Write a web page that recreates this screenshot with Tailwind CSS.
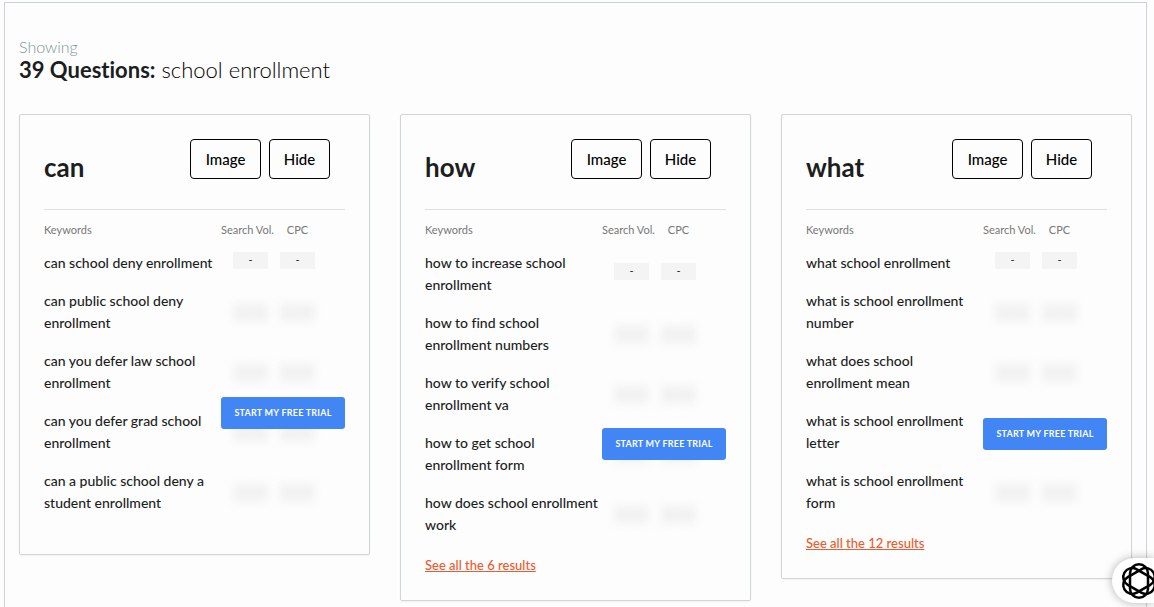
<!DOCTYPE html>
<html lang="en">
<head>
<meta charset="utf-8">
<meta name="viewport" content="width=device-width, initial-scale=1">
<title>39 Questions: school enrollment</title>
<script src="https://cdn.jsdelivr.net/npm/@tailwindcss/browser@4"></script>
</head>
<body class="overflow-hidden bg-[#fdfdfd] font-['Lato',sans-serif] text-[#1c1e1e] [font-variant-ligatures:none]">
<main class="mt-0.5 mr-[7px] ml-1 min-h-screen border border-[#cbd5d8] px-3.5 pt-[34px]">
  <header>
    <p class="text-base leading-5 font-light text-[#7f9197]">Showing</p>
    <h1 class="text-[22px] leading-[26px] font-light text-black"><strong class="font-bold text-[#1c1e1e]">39 Questions:</strong> school enrollment</h1>
  </header>
  <div id="cards" class="mt-[31px] grid grid-cols-3 items-start gap-[30px]"></div>
</main>

<button aria-label="Open assistant" class="fixed right-0 bottom-1 flex h-[45px] w-[42px] items-center rounded-l-full bg-white pl-2 shadow-[0_0_10px_rgba(0,0,0,0.3)]">
  <svg class="h-[38px] w-[38px] shrink-0" viewBox="-19 -19 38 38" fill="none" stroke="#000" stroke-width="2.5">
    <rect x="-9" y="-16.8" width="18" height="33.6" rx="9"/>
    <rect x="-9" y="-16.8" width="18" height="33.6" rx="9" transform="rotate(60)"/>
    <rect x="-9" y="-16.8" width="18" height="33.6" rx="9" transform="rotate(120)"/>
  </svg>
</button>

<script>
const groups = [
  { word: 'can', trial: 'top-[187px]', rows: ['can school deny enrollment', 'can public school deny enrollment', 'can you defer law school enrollment', 'can you defer grad school enrollment', 'can a public school deny a student enrollment'] },
  { word: 'how', trial: 'top-[218px]', link: 'See all the 6 results', rows: ['how to increase school enrollment', 'how to find school enrollment numbers', 'how to verify school enrollment va', 'how to get school enrollment form', 'how does school enrollment work'] },
  { word: 'what', trial: 'top-[208px]', link: 'See all the 12 results', rows: ['what school enrollment', 'what is school enrollment number', 'what does school enrollment mean', 'what is school enrollment letter', 'what is school enrollment form'] }
];
const open = '<td class="pb-[6px] align-middle"><div class="mx-auto h-[17px] w-[35px] bg-[#f4f4f4] text-center text-[11px] leading-[15px]">-</div></td>';
const locked = '<td class="align-middle"><div class="mx-auto h-[17px] w-[35px] bg-[#f1f1f1] blur-[5px]"></div></td>';
document.getElementById('cards').innerHTML = groups.map(g => `
  <section class="rounded-xs border border-[#cfd6d8] px-6 pt-6 shadow-xs ${g.link ? 'pb-6' : 'pb-8'}">
    <div class="flex h-[71px] justify-between border-b border-[#dde0e1] pr-[15px]">
      <h2 class="pt-3 text-[26px] leading-8 font-bold">${g.word}</h2>
      <div class="flex gap-2">
        <button class="h-10 w-[71px] rounded border border-black text-[15px] font-medium text-black">Image</button>
        <button class="h-10 w-[61px] rounded border border-black text-[15px] font-medium text-black">Hide</button>
      </div>
    </div>
    <div class="relative">
      <table class="w-full table-fixed border-collapse text-left">
        <thead>
          <tr class="h-[34px] text-[11px] leading-4 text-[#777]">
            <th class="pt-1.5 font-normal">Keywords</th>
            <th class="w-[59px] pt-1.5 font-normal whitespace-nowrap">Search Vol.</th>
            <th class="w-[35px] pt-1.5 text-center font-normal">CPC</th>
            <td class="w-[30px]"></td>
          </tr>
        </thead>
        <tbody>${g.rows.map((r, i) => `
          <tr><td class="py-2 text-sm leading-[22px] font-medium">${r}</td>${i ? locked + locked : open + open}<td></td></tr>`).join('')}
        </tbody>
      </table>
      <button class="absolute right-0 ${g.trial} h-8 w-[124px] rounded-[3px] bg-[#4285f4] text-[9px] font-bold tracking-wide whitespace-nowrap text-white">START MY FREE TRIAL</button>
    </div>
    ${g.link ? `<a href="#" class="mt-2.5 block text-[13px] leading-[22px] font-medium text-[#ee5a2b] underline">${g.link}</a>` : ''}
  </section>`).join('');
</script>
</body>
</html>
